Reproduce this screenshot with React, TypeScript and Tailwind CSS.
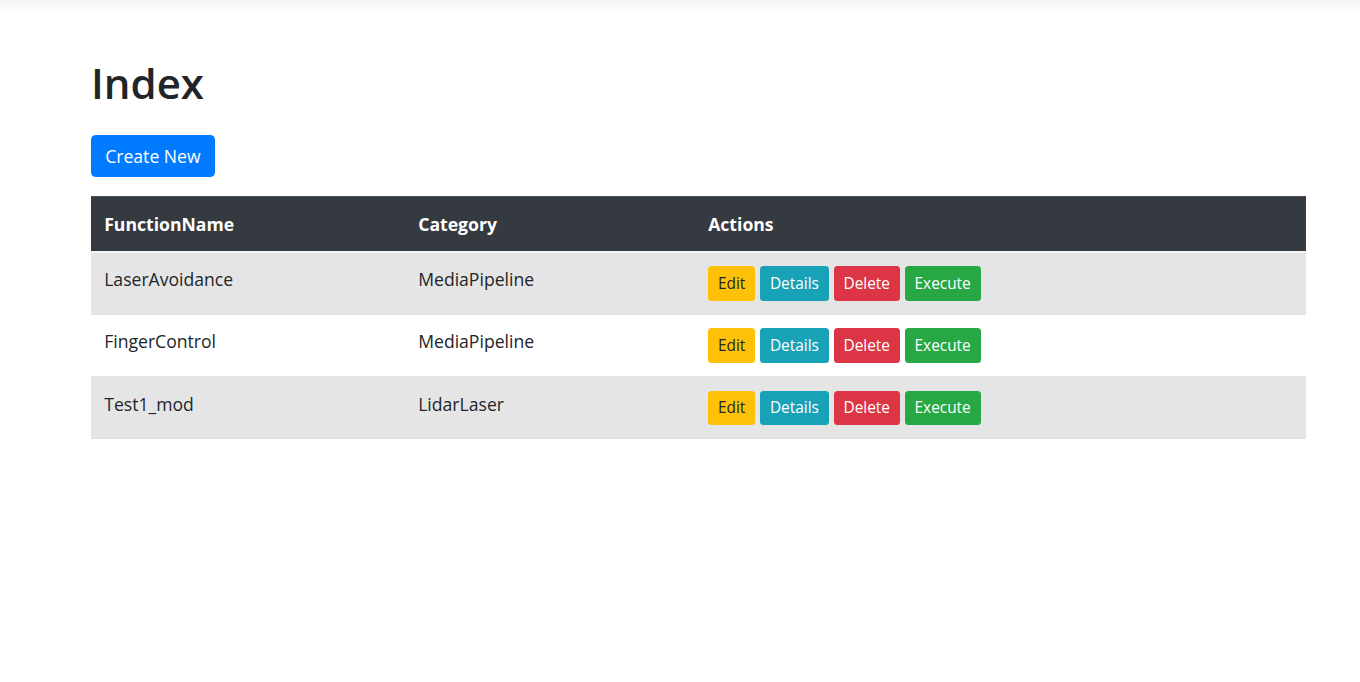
import React from 'react';

type Row = { name: string; category: string };

const rows: Row[] = [
    { name: 'LaserAvoidance', category: 'MediaPipeline' },
    { name: 'FingerControl', category: 'MediaPipeline' },
    { name: 'Test1_mod', category: 'LidarLaser' },
];

const btn = 'inline-block px-[8.8px] py-[4.4px] text-[15.4px] leading-[24px] rounded-[3.5px] border border-transparent';
const th = 'text-left font-bold px-[13.2px] pt-[13.6px] pb-[13.6px] border-t border-[#454d55] border-b-2 border-b-[#f4f5f6]';
const td = 'align-top px-[13.2px] py-[13.2px] border-b border-[#dee2e6]';

const App: React.FC = () => {
    return (
        <div className="min-h-screen bg-white text-[#212529] font-['Open_Sans',sans-serif]">
            <div className="h-3 bg-linear-to-b from-[#f3f3f3] to-white" />

            <main className="pl-[91px] pr-[54px] pt-[44px]">
                <h1 className="text-[42px] leading-[53px] font-semibold mb-[26px]">Index</h1>

                <button className="px-[13.2px] py-[7px] text-[17.6px] leading-[26.4px] rounded-[4.4px] bg-[#007bff] text-white border border-[#007bff] mb-[19px]">
                    Create New
                </button>

                <table className="w-full text-[17.6px] leading-[26.4px] border-separate border-spacing-0">
                    <thead>
                        <tr className="bg-[#343a40] text-white">
                            <th className={`w-[314px] ${th}`}>FunctionName</th>
                            <th className={`w-[290px] ${th}`}>Category</th>
                            <th className={th}>Actions</th>
                        </tr>
                    </thead>
                    <tbody>
                        {rows.map((r, i) => (
                            <tr key={r.name} className={i % 2 === 0 ? 'bg-[#e5e5e5]' : 'bg-white'}>
                                <td className={td}>{r.name}</td>
                                <td className={td}>{r.category}</td>
                                <td className={td}>
                                    <div className="flex gap-[5px]">
                                        <a className={`${btn} bg-[#ffc107] text-[#212529]`}>Edit</a>
                                        <a className={`${btn} bg-[#17a2b8] text-white`}>Details</a>
                                        <a className={`${btn} bg-[#dc3545] text-white`}>Delete</a>
                                        <a className={`${btn} bg-[#28a745] text-white`}>Execute</a>
                                    </div>
                                </td>
                            </tr>
                        ))}
                    </tbody>
                </table>
            </main>
        </div>
    );
};

export default App;
